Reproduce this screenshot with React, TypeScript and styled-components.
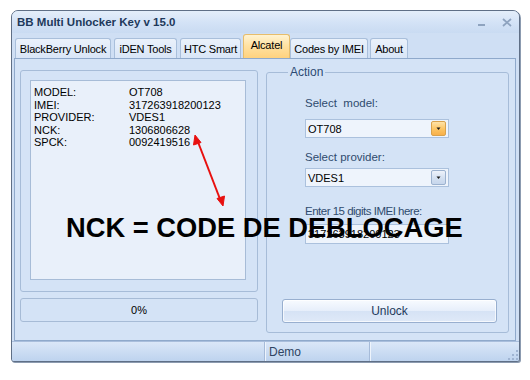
import { Fragment } from "react";
import styled, { createGlobalStyle } from "styled-components";

const Global = createGlobalStyle`
  html, body {
    margin: 0;
    padding: 0;
    background: #ffffff;
  }
  body {
    font-family: "Liberation Sans", Arial, sans-serif;
    font-size: 11px;
    color: #000;
  }
`;

const Canvas = styled.div`
  position: relative;
  width: 530px;
  height: 380px;
  padding: 10px 0 0 11px;
  box-sizing: border-box;
`;

const Window = styled.div`
  width: 509px;
  height: 352px;
  box-sizing: border-box;
  border: 1px solid #5f6f86;
  border-radius: 7px 7px 3px 3px;
  box-shadow: 1px 1px 0 #8c9bb0;
  background: #cfdff4;
  display: flex;
  flex-direction: column;
  overflow: hidden;
`;

const TitleBar = styled.div`
  height: 22px;
  flex: none;
  display: flex;
  align-items: center;
  padding: 0 6px 0 5px;
  background: linear-gradient(#e4eefa, #d3e2f6 55%, #c9dbf2);
`;

const Title = styled.div`
  flex: 1;
  font-weight: bold;
  font-size: 11.5px;
  color: #1e395b;
`;

const CaptionButtons = styled.div`
  display: flex;
  align-items: center;
  gap: 16px;
  padding-right: 1px;
`;

const TabStrip = styled.div`
  height: 25px;
  flex: none;
  display: flex;
  align-items: flex-end;
  padding-left: 3px;
`;

const Tab = styled.div<{ $w: number; $active?: boolean; $gap: number }>`
  width: ${(p) => p.$w}px;
  margin-right: ${(p) => p.$gap}px;
  height: ${(p) => (p.$active ? 24 : 20)}px;
  box-sizing: border-box;
  display: flex;
  align-items: center;
  justify-content: center;
  padding-bottom: ${(p) => (p.$active ? 4 : 0)}px;
  border: 1px solid ${(p) => (p.$active ? "#e7bd6b" : "#a9bfdb")};
  border-bottom: none;
  border-radius: 3px 3px 0 0;
  background: ${(p) =>
    p.$active
      ? "linear-gradient(#fff3d2, #ffe2a3 45%, #ffd27e)"
      : "linear-gradient(#eaf1fb, #d9e6f7)"};
  font-size: 11px;
  letter-spacing: -0.2px;
  white-space: nowrap;
  color: #000;
`;

const Page = styled.div`
  height: 283px;
  flex: none;
  box-sizing: border-box;
  margin: 0 3px 0 2px;
  border: 1px solid #8fa9cb;
  background: #d4e3f6;
  display: grid;
  grid-template-columns: 238px 243px;
  column-gap: 8px;
  align-items: start;
  padding-left: 5px;
`;

const LeftColumn = styled.div`
  display: flex;
  flex-direction: column;
  gap: 6px;
  padding-top: 11px;
`;

const ResultGroup = styled.div`
  height: 222px;
  box-sizing: border-box;
  border: 1px solid #a6bcd8;
  border-radius: 3px;
  padding: 9px 11px 11px 9px;
`;

const ResultBox = styled.div`
  height: 100%;
  box-sizing: border-box;
  border: 1px solid #a7bcd7;
  background: #e9f0fa;
  padding: 5px 3px;
  display: grid;
  grid-template-columns: 95px 1fr;
  grid-auto-rows: 12.5px;
  align-content: start;
  line-height: 12.5px;
  font-size: 11px;
`;

const Progress = styled.div`
  height: 24px;
  box-sizing: border-box;
  border: 1px solid #a6bbd6;
  border-radius: 3px;
  display: flex;
  align-items: center;
  justify-content: center;
  font-size: 11px;
  color: #000;
`;

const ActionSet = styled.fieldset`
  margin: 7px 0 0 0;
  height: 267px;
  box-sizing: border-box;
  border: 1px solid #a6bcd8;
  border-radius: 3px;
  padding: 0 11px 9px 15px;
  display: flex;
  flex-direction: column;
  min-width: 0;
`;

const Legend = styled.legend`
  margin-left: 6px;
  padding: 0 2px;
  font-size: 12px;
  line-height: 13px;
  color: #2b4a73;
`;

const Label = styled.div<{ $mt: number; $tight?: boolean }>`
  margin: ${(p) => p.$mt}px 0 0 23px;
  height: 13px;
  line-height: 13px;
  font-size: 11.5px;
  color: #2f4b6e;
  white-space: pre;
  letter-spacing: ${(p) => (p.$tight ? "-0.5px" : "0")};
`;

const Combo = styled.div<{ $mt: number }>`
  margin: ${(p) => p.$mt}px 0 0 23px;
  width: 144px;
  height: 19px;
  box-sizing: border-box;
  border: 1px solid #abc1dd;
  background: #eef4fc;
  display: flex;
  align-items: center;
  padding: 0 2px 0 2px;
  font-size: 11px;
`;

const ComboText = styled.span`
  flex: 1;
`;

const DropButton = styled.div<{ $hot?: boolean }>`
  width: 15px;
  height: 15px;
  box-sizing: border-box;
  border: 1px solid ${(p) => (p.$hot ? "#d9a24c" : "#9cb2cf")};
  border-radius: 2px;
  background: ${(p) =>
    p.$hot
      ? "linear-gradient(#ffe3a8, #fcc462 55%, #f8b04a)"
      : "linear-gradient(#eef3fb, #d3e0f1 55%, #c6d6ec)"};
  display: flex;
  align-items: center;
  justify-content: center;
`;

const TextBox = styled.div<{ $mt: number }>`
  margin: ${(p) => p.$mt}px 0 0 23px;
  width: 144px;
  height: 20px;
  box-sizing: border-box;
  border: 1px solid #abc1dd;
  background: #eef4fc;
  display: flex;
  align-items: center;
  padding-left: 2px;
  font-size: 11px;
`;

const UnlockButton = styled.div`
  margin-top: auto;
  height: 24px;
  box-sizing: border-box;
  border: 1px solid #98afcf;
  border-radius: 3px;
  background: linear-gradient(#f8fbff, #e6eefa 50%, #d6e3f5 51%, #dfe9f8);
  box-shadow: inset 0 0 0 1px rgba(255, 255, 255, 0.7);
  display: flex;
  align-items: center;
  justify-content: center;
  font-size: 12px;
  color: #1f3a5c;
`;

const StatusBar = styled.div`
  flex: 1;
  display: flex;
  border-top: 1px solid #a9bedc;
  background: linear-gradient(#dae7f8, #c9dbf2 60%, #bed3ee);
`;

const StatusPanel = styled.div<{ $w?: number }>`
  ${(p) => (p.$w ? `width: ${p.$w}px; flex: none;` : "flex: 1;")}
  display: flex;
  align-items: center;
  justify-content: space-between;
  padding-left: 4px;
  border-right: 1px solid #a6bbd9;
  box-shadow: 1px 0 0 #eef4fc;
  font-size: 12px;
  color: #2f4462;
  &:last-child {
    border-right: none;
    box-shadow: none;
    align-items: flex-end;
  }
`;

const Overlay = styled.div`
  position: absolute;
  left: 66px;
  top: 214px;
  font-family: "Liberation Sans", Arial, sans-serif;
  font-weight: bold;
  font-size: 27.3px;
  line-height: 27px;
  color: #000;
  white-space: nowrap;
  pointer-events: none;
`;

const ArrowLayer = styled.svg`
  position: absolute;
  left: 0;
  top: 0;
  pointer-events: none;
`;

const tabs = [
  { label: "BlackBerry Unlock", w: 96, gap: 3 },
  { label: "iDEN Tools", w: 63, gap: 3 },
  { label: "HTC Smart", w: 61, gap: 2 },
  { label: "Alcatel", w: 47, gap: 0, active: true },
  { label: "Codes by IMEI", w: 78, gap: 2 },
  { label: "About", w: 38, gap: 0 },
];

const results = [
  ["MODEL:", "OT708"],
  ["IMEI:", "317263918200123"],
  ["PROVIDER:", "VDES1"],
  ["NCK:", "1306806628"],
  ["SPCK:", "0092419516"],
];

function Caret() {
  return (
    <svg width="7" height="4" viewBox="0 0 7 4">
      <path d="M1.5 0.5 H5.5 L3.5 3 Z" fill="#1b1b1b" />
    </svg>
  );
}

export default function App() {
  return (
    <Canvas>
      <Global />
      <Window>
        <TitleBar>
          <Title>BB Multi Unlocker Key v 15.0</Title>
          <CaptionButtons>
            <svg width="8" height="10" viewBox="0 0 8 10">
              <rect x="0" y="7" width="7" height="2" fill="#8ea3bf" />
            </svg>
            <svg width="10" height="9" viewBox="0 0 10 9">
              <path d="M1 1 L9 8 M9 1 L1 8" stroke="#8ea3bf" strokeWidth="1.8" />
            </svg>
          </CaptionButtons>
        </TitleBar>

        <TabStrip>
          {tabs.map((t) => (
            <Tab key={t.label} $w={t.w} $gap={t.gap} $active={t.active}>
              {t.label}
            </Tab>
          ))}
        </TabStrip>

        <Page>
          <LeftColumn>
            <ResultGroup>
              <ResultBox>
                {results.map(([k, v]) => (
                  <Fragment key={k}>
                    <span>{k}</span>
                    <span>{v}</span>
                  </Fragment>
                ))}
              </ResultBox>
            </ResultGroup>
            <Progress>0%</Progress>
          </LeftColumn>

          <ActionSet>
            <Legend>Action</Legend>
            <Label $mt={18}>{"Select  model:"}</Label>
            <Combo $mt={9}>
              <ComboText>OT708</ComboText>
              <DropButton $hot>
                <Caret />
              </DropButton>
            </Combo>
            <Label $mt={13}>Select provider:</Label>
            <Combo $mt={4}>
              <ComboText>VDES1</ComboText>
              <DropButton>
                <Caret />
              </DropButton>
            </Combo>
            <Label $mt={18} $tight>
              Enter 15 digits IMEI here:
            </Label>
            <TextBox $mt={6}>317263918200123</TextBox>
            <UnlockButton>Unlock</UnlockButton>
          </ActionSet>
        </Page>

        <StatusBar>
          <StatusPanel $w={248} />
          <StatusPanel $w={100}>Demo</StatusPanel>
          <StatusPanel>
            <span />
            <svg width="12" height="12" viewBox="0 0 12 12">
              <g fill="#9fb4d2">
                <rect x="9" y="1" width="2" height="2" />
                <rect x="5" y="5" width="2" height="2" />
                <rect x="9" y="5" width="2" height="2" />
                <rect x="1" y="9" width="2" height="2" />
                <rect x="5" y="9" width="2" height="2" />
                <rect x="9" y="9" width="2" height="2" />
              </g>
            </svg>
          </StatusPanel>
        </StatusBar>
      </Window>

      <Overlay>NCK = CODE DE DEBLOCAGE</Overlay>

      <ArrowLayer width="530" height="380" viewBox="0 0 530 380">
        <g stroke="#e8100f" strokeWidth="2" fill="#e8100f">
          <line x1="198" y1="142" x2="220" y2="199" />
          <path d="M195 135 L193.5 145 L201 142.5 Z" strokeWidth="1" />
          <path d="M223 206 L224.5 196 L217 198.5 Z" strokeWidth="1" />
        </g>
      </ArrowLayer>
    </Canvas>
  );
}
